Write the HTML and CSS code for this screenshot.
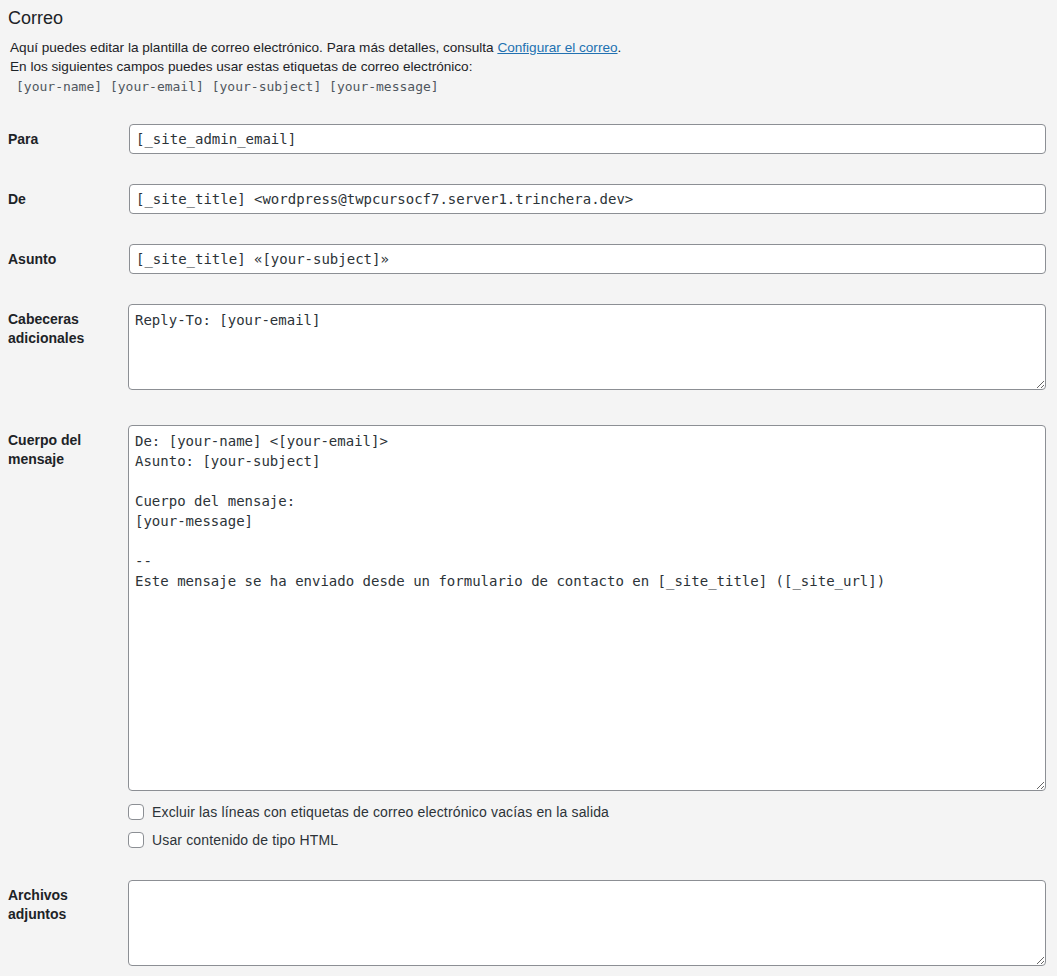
FILE: index.html
```html
<!DOCTYPE html>
<html lang="es">
<head>
<meta charset="utf-8">
<title>Correo</title>
<link rel="stylesheet" href="styles.css">
</head>
<body>
<div class="panel">
  <h2 class="title">Correo</h2>
  <p class="desc">Aquí puedes editar la plantilla de correo electrónico. Para más detalles, consulta <a href="#" class="link">Configurar el correo</a>.<br>En los siguientes campos puedes usar estas etiquetas de correo electrónico:</p>
  <p class="tags"><span class="tag">[your-name]</span> <span class="tag">[your-email]</span> <span class="tag">[your-subject]</span> <span class="tag">[your-message]</span></p>

  <div class="form">
    <div class="row">
      <label class="label" for="f-to">Para</label>
      <div class="field"><textarea id="f-to" class="input" rows="1" wrap="off">[_site_admin_email]</textarea></div>
    </div>
    <div class="row">
      <label class="label" for="f-from">De</label>
      <div class="field"><textarea id="f-from" class="input" rows="1" wrap="off">[_site_title] &lt;wordpress@twpcursocf7.server1.trinchera.dev&gt;</textarea></div>
    </div>
    <div class="row">
      <label class="label" for="f-subj">Asunto</label>
      <div class="field"><textarea id="f-subj" class="input" rows="1" wrap="off">[_site_title] «[your-subject]»</textarea></div>
    </div>
    <div class="row row-tall">
      <label class="label" for="f-head">Cabeceras adicionales</label>
      <div class="field"><textarea id="f-head" class="area area-small">Reply-To: [your-email]</textarea></div>
    </div>
    <div class="row row-body">
      <label class="label" for="f-body">Cuerpo del mensaje</label>
      <div class="field">
        <textarea id="f-body" class="area area-large">De: [your-name] &lt;[your-email]&gt;
Asunto: [your-subject]

Cuerpo del mensaje:
[your-message]

-- 
Este mensaje se ha enviado desde un formulario de contacto en [_site_title] ([_site_url])</textarea>
        <div class="checks">
          <label class="check"><input type="checkbox" class="box"><span>Excluir las líneas con etiquetas de correo electrónico vacías en la salida</span></label>
          <label class="check"><input type="checkbox" class="box"><span>Usar contenido de tipo HTML</span></label>
        </div>
      </div>
    </div>
    <div class="row">
      <label class="label" for="f-att">Archivos adjuntos</label>
      <div class="field"><textarea id="f-att" class="area area-small"></textarea></div>
    </div>
  </div>
</div>
</body>
</html>
```

FILE: styles.css
```css
html, body {
  margin: 0;
  padding: 0;
  background: #f4f4f4;
}

body {
  font-family: "Liberation Sans", Arial, sans-serif;
  font-size: 13px;
  color: #1d2327;
  overflow: hidden;
}

.panel {
  padding: 7px 11px 0 8px;
}

.title {
  margin: 0;
  font-size: 18px;
  font-weight: 400;
  line-height: 22px;
  color: #1d2327;
}

.desc {
  margin: 9px 0 0 2px;
  font-size: 13.6px;
  line-height: 19px;
}

.link {
  color: #2271b1;
  text-decoration: underline;
}

.tags {
  margin: 1px 0 0 8px;
  font-family: "DejaVu Sans Mono", "Liberation Mono", monospace;
  font-size: 13px;
  line-height: 20px;
  color: #50575e;
}

.form {
  margin-top: 12px;
  display: flex;
  flex-direction: column;
}

.row {
  display: grid;
  grid-template-columns: 120px 1fr;
  padding: 15px 0;
}

.row-tall {
  padding-bottom: 20px;
}

.row-body {
  padding-bottom: 11px;
}

.label {
  padding-top: 6px;
  padding-right: 10px;
  font-size: 14px;
  font-weight: 700;
  line-height: 19px;
  color: #1d2327;
}

.field {
  display: flex;
  flex-direction: column;
}

.input {
  box-sizing: border-box;
  display: block;
  width: calc(100% - 1px);
  margin: 0 0 0 1px;
  height: 30px;
  padding: 4px 6px;
  border: 1px solid #8c8f94;
  border-radius: 4px;
  background: #fff;
  font-family: "DejaVu Sans Mono", "Liberation Mono", monospace;
  font-size: 14px;
  line-height: 20px;
  color: #2c3338;
  outline: none;
  resize: none;
  overflow: hidden;
  white-space: pre;
}

.area {
  box-sizing: border-box;
  display: block;
  width: 100%;
  margin: 0;
  padding: 5px 6px 3px;
  border: 1px solid #8c8f94;
  border-radius: 4px;
  background: #fff;
  font-family: "DejaVu Sans Mono", "Liberation Mono", monospace;
  font-size: 14px;
  line-height: 20px;
  color: #2c3338;
  resize: vertical;
  outline: none;
}

.area-small {
  height: 86px;
}

.area-large {
  height: 366px;
}

.checks {
  display: flex;
  flex-direction: column;
  margin-top: 7px;
}

.check {
  display: flex;
  align-items: center;
  gap: 8px;
  height: 28px;
  font-size: 14px;
  letter-spacing: 0.15px;
  color: #2c3338;
}

.box {
  appearance: none;
  -webkit-appearance: none;
  box-sizing: border-box;
  width: 16px;
  height: 16px;
  margin: 0;
  border: 1px solid #8c8f94;
  border-radius: 4px;
  background: #fff;
  flex: none;
}
```
